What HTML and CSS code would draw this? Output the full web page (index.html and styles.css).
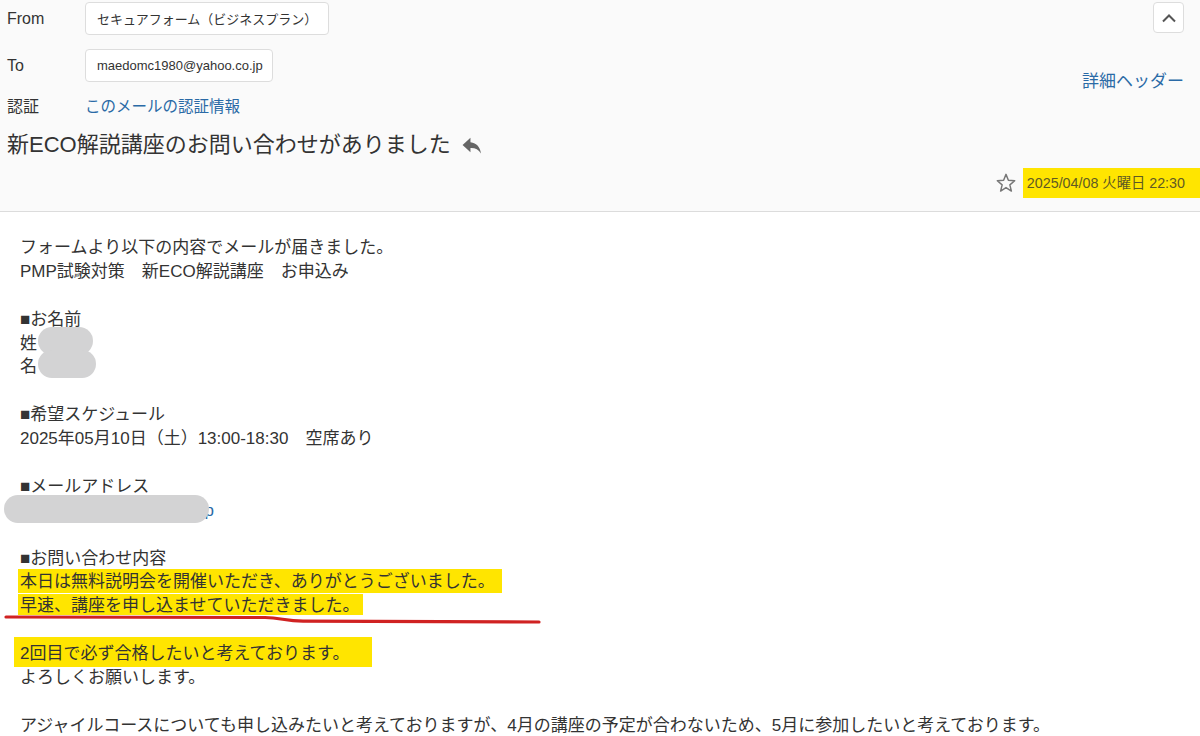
FILE: index.html
```html
<!DOCTYPE html>
<html lang="ja">
<head>
<meta charset="utf-8">
<title>新ECO解説講座のお問い合わせがありました</title>
<link rel="stylesheet" href="styles.css">
</head>
<body>
<header class="mail-head">
  <div class="head-main">
    <div class="head-row">
      <span class="head-label">From</span>
      <span class="addr-box addr-from">セキュアフォーム（ビジネスプラン）</span>
    </div>
    <div class="head-row row-to">
      <span class="head-label">To</span>
      <span class="addr-box addr-to">maedomc1980@yahoo.co.jp</span>
    </div>
    <div class="head-row row-auth">
      <span class="head-label">認証</span>
      <a class="link auth-link" href="#">このメールの認証情報</a>
    </div>
    <h1 class="subject">新ECO解説講座のお問い合わせがありました
      <svg class="reply-icon" viewBox="0 0 20 18" width="21" height="19" aria-hidden="true">
        <path d="M9 1.5 L1.5 8.5 L9 15.5 V11.3 C13.5 11.1 16.6 12.6 19 16.5 C18.4 11 15 6.6 9 6 Z" fill="#666"/>
      </svg>
    </h1>
  </div>
  <div class="head-side">
    <button class="collapse-btn" type="button" aria-label="閉じる">
      <svg viewBox="0 0 16 10" width="16" height="10" aria-hidden="true">
        <path d="M2 8.5 L8 2.5 L14 8.5" fill="none" stroke="#555" stroke-width="2"/>
      </svg>
    </button>
    <a class="link detail-link" href="#">詳細ヘッダー</a>
    <div class="date-row">
      <svg class="star" viewBox="0 0 24 24" width="22" height="22" aria-hidden="true">
        <path d="M12 2.6 L14.6 9.1 L21.5 9.5 L16.2 14 L17.9 20.8 L12 17 L6.1 20.8 L7.8 14 L2.5 9.5 L9.4 9.1 Z" fill="none" stroke="#777" stroke-width="1.6" stroke-linejoin="round"/>
      </svg>
      <span class="date-mark">2025/04/08 火曜日 22:30</span>
    </div>
  </div>
</header>

<main class="mail-body">
  <div class="line">フォームより以下の内容でメールが届きました。</div>
  <div class="line">PMP試験対策　新ECO解説講座　お申込み</div>
  <div class="line blank"></div>
  <div class="line">■お名前</div>
  <div class="line">姓<span class="blur blur-sei"></span></div>
  <div class="line">名<span class="blur blur-mei"></span></div>
  <div class="line blank"></div>
  <div class="line">■希望スケジュール</div>
  <div class="line">2025年05月10日（土）13:00-18:30　空席あり</div>
  <div class="line blank"></div>
  <div class="line">■メールアドレス</div>
  <div class="line"><a class="link mail-link" href="#">xxxxxxx@xxxxxxxxx.co.jp</a><span class="blur blur-mail"></span></div>
  <div class="line blank"></div>
  <div class="line">■お問い合わせ内容</div>
  <div class="line mark mark-1"><span class="mark-text">本日は無料説明会を開催いただき、ありがとうございました。</span></div>
  <div class="line mark mark-2"><span class="mark-text">早速、講座を申し込ませていただきました。</span>
    <svg class="red-line" viewBox="0 0 540 12" width="540" height="12" aria-hidden="true">
      <path d="M3 4 L262 4.5 C278 4.8 282 8 300 8.2 L536 9" fill="none" stroke="#d02222" stroke-width="3.2" stroke-linecap="round"/>
    </svg>
  </div>
  <div class="line blank"></div>
  <div class="line mark mark-3"><span class="mark-text">2回目で必ず合格したいと考えております。</span></div>
  <div class="line">よろしくお願いします。</div>
  <div class="line blank"></div>
  <div class="line">アジャイルコースについても申し込みたいと考えておりますが、4月の講座の予定が合わないため、5月に参加したいと考えております。</div>
</main>
</body>
</html>
```

FILE: styles.css
```css
* { box-sizing: border-box; }

html, body {
  margin: 0;
  padding: 0;
  background: #ffffff;
}

body {
  font-family: "Liberation Sans", Arial, "Noto Sans CJK JP", sans-serif;
  color: #333333;
  width: 1200px;
  height: 736px;
  overflow: hidden;
}

.link {
  color: #2a6aa6;
  text-decoration: none;
}

/* ---------- header ---------- */
.mail-head {
  display: flex;
  justify-content: space-between;
  height: 212px;
  background: #fafafa;
  border-bottom: 1px solid #dcdcdc;
}

.head-main {
  padding: 2px 0 0 7px;
}

.head-row {
  display: flex;
  align-items: center;
  height: 33px;
}

.row-to { margin-top: 14px; }

.row-auth {
  margin-top: 13px;
  height: 20px;
}

.head-label {
  width: 78px;
  font-size: 16px;
  color: #333333;
}

.addr-box {
  display: flex;
  align-items: center;
  height: 33px;
  padding: 0 11px;
  background: #ffffff;
  border: 1px solid #dddddd;
  border-radius: 4px;
  font-size: 13px;
  color: #333333;
  white-space: nowrap;
}

.addr-from { width: 244px; }
.addr-to { width: 188px; }

.auth-link {
  font-size: 15.5px;
  margin-left: 0;
}

.subject {
  margin: 15px 0 0 0;
  font-size: 22px;
  font-weight: normal;
  line-height: 30px;
  color: #333333;
  display: flex;
  align-items: center;
  white-space: nowrap;
}

.reply-icon {
  margin-left: 10px;
  margin-top: 1px;
}

.head-side {
  display: flex;
  flex-direction: column;
  align-items: flex-end;
  padding: 2px 16px 13px 0;
}

.collapse-btn {
  width: 31px;
  height: 31px;
  padding: 0;
  display: flex;
  align-items: center;
  justify-content: center;
  background: #ffffff;
  border: 1px solid #dddddd;
  border-radius: 4px;
}

.detail-link {
  margin-top: 39px;
  font-size: 17px;
  line-height: 20px;
}

.date-row {
  margin-top: auto;
  display: flex;
  align-items: center;
  margin-right: -16px;
}

.star {
  margin-right: 6px;
}

.date-mark {
  display: block;
  height: 30px;
  line-height: 31px;
  padding: 0 15px 0 4px;
  background: #ffe500;
  font-size: 14.3px;
  color: #5f5a24;
  white-space: nowrap;
}

/* ---------- body ---------- */
.mail-body {
  padding: 24px 0 0 20px;
  font-size: 17px;
  line-height: 23.9px;
  color: #333333;
}

.line {
  position: relative;
  height: 23.9px;
  white-space: nowrap;
}

.mark .mark-text {
  position: relative;
  z-index: 1;
}

.mark::before {
  content: "";
  position: absolute;
  background: #ffe500;
  z-index: 0;
}

.mark-1::before { left: -2px; top: -1px; width: 484px; height: 24px; }
.mark-2::before { left: -2px; top: 0; width: 345px; height: 21px; }
.mark-3::before { left: -6px; top: -5px; width: 358px; height: 30px; }

.red-line {
  position: absolute;
  left: -17px;
  top: 19px;
  z-index: 2;
}

.blur {
  position: absolute;
  background: #d3d3d4;
  border-radius: 14px;
  height: 28px;
}

.blur-sei { left: 18px; top: -5px; width: 55px; }
.blur-mei { left: 18px; top: -5px; width: 58px; }
.blur-mail { left: -16px; top: -4px; width: 205px; }
```
